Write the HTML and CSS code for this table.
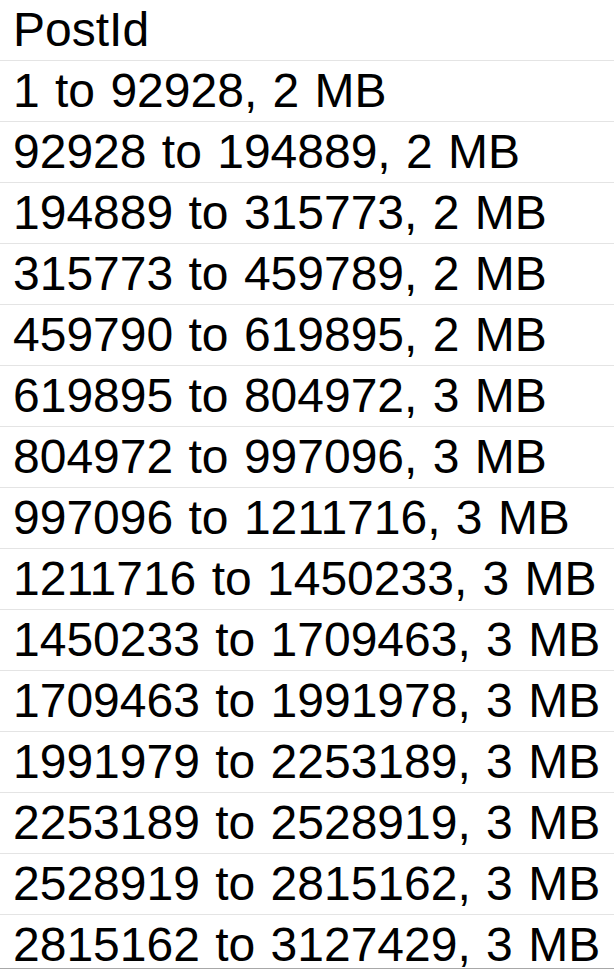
FILE: index.html
```html
<!DOCTYPE html>
<html lang="en">
<head>
    <meta charset="UTF-8">
    <title>PostId</title>
    <link rel="stylesheet" href="styles.css">
</head>
<body>
    <div class="list">
        <div class="row">PostId</div>
        <div class="row">1 to 92928, 2 MB</div>
        <div class="row">92928 to 194889, 2 MB</div>
        <div class="row">194889 to 315773, 2 MB</div>
        <div class="row">315773 to 459789, 2 MB</div>
        <div class="row">459790 to 619895, 2 MB</div>
        <div class="row">619895 to 804972, 3 MB</div>
        <div class="row">804972 to 997096, 3 MB</div>
        <div class="row">997096 to 1211716, 3 MB</div>
        <div class="row">1211716 to 1450233, 3 MB</div>
        <div class="row">1450233 to 1709463, 3 MB</div>
        <div class="row">1709463 to 1991978, 3 MB</div>
        <div class="row">1991979 to 2253189, 3 MB</div>
        <div class="row">2253189 to 2528919, 3 MB</div>
        <div class="row">2528919 to 2815162, 3 MB</div>
        <div class="row last">2815162 to 3127429, 3 MB</div>
    </div>
</body>
</html>
```

FILE: styles.css
```css
body {
    margin: 0;
    padding: 0;
    background: #fff;
    font-family: "Liberation Sans", Arial, sans-serif;
    color: #000;
    overflow: hidden;
}
.list {
    display: flex;
    flex-direction: column;
}
.row {
    height: 60px;
    line-height: 60px;
    font-size: 48px;
    padding-left: 13px;
    word-spacing: 2px;
    border-bottom: 1px solid #e4e4e4;
    white-space: nowrap;
}
.row.last {
    height: 53px;
    border-bottom: 1px solid #a8a8a8;
}
```
